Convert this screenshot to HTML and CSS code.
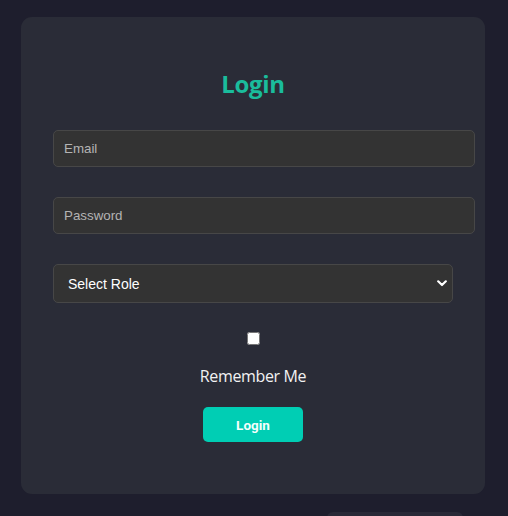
FILE: index.html
```html
<!DOCTYPE html>
<html lang="en">
<head>
<meta charset="utf-8">
<title>Login</title>
<link rel="stylesheet" href="styles.css">
</head>
<body>
<div class="page">
  <form class="card">
    <h2 class="title">Login</h2>
    <input class="field" type="email" placeholder="Email">
    <input class="field" type="password" placeholder="Password">
    <div class="select-wrap">
      <select class="select">
        <option>Select Role</option>
      </select>
      <svg class="chev" width="10" height="7" viewBox="0 0 10 7"><path d="M1.2 1.3 L5 5 L8.8 1.3" fill="none" stroke="#ffffff" stroke-width="2.2" stroke-linecap="round" stroke-linejoin="round"/></svg>
    </div>
    <input class="check" type="checkbox" id="rem">
    <label class="remember" for="rem">Remember Me</label>
    <button class="btn" type="button">Login</button>
  </form>
  <div class="below"></div>
</div>
</body>
</html>
```
FILE: styles.css
```css
html, body {
  margin: 0;
  padding: 0;
  background: #1e1e2d;
}
.page {
  padding: 17px 0 0 21px;
  height: 516px;
  box-sizing: border-box;
  overflow: hidden;
}
.card {
  width: 400px;
  padding: 32px 32px 52px;
  background: #2a2c37;
  border-radius: 11px;
  display: flex;
  flex-direction: column;
  align-items: flex-start;
  font-family: "Open Sans", "Noto Sans", sans-serif;
}
.title {
  align-self: stretch;
  text-align: center;
  margin: 19px 0 30px;
  font-size: 24px;
  line-height: 32px;
  font-weight: 700;
  color: #1abc9c;
  letter-spacing: -0.3px;
}
.field {
  display: block;
  width: 100%;
  padding: 10px;
  margin: 0 0 30px;
  background: #333333;
  border: 1px solid #474747;
  border-radius: 5px;
  color: #eeeeee;
  font-family: "Liberation Sans", Arial, sans-serif;
  font-size: 13.333px;
  line-height: 15px;
  outline: none;
}
.field::placeholder {
  color: #b4b4b4;
}
.select-wrap {
  position: relative;
  width: 400px;
  margin: 0 0 30px;
}
.select {
  display: block;
  width: 400px;
  height: 39px;
  padding: 0 14px;
  background: #333333;
  border: 1px solid #474747;
  border-radius: 5px;
  color: #ffffff;
  font-family: "Liberation Sans", Arial, sans-serif;
  font-size: 14px;
  appearance: none;
  -webkit-appearance: none;
  outline: none;
}
.chev {
  position: absolute;
  right: 6px;
  top: 16px;
}
.check {
  align-self: center;
  width: 13px;
  height: 13px;
  margin: -1px 0 20px;
}
.remember {
  align-self: center;
  font-size: 16px;
  line-height: 22px;
  color: #f2f2f2;
  letter-spacing: -0.35px;
  margin: 0 0 20px;
}
.btn {
  align-self: center;
  width: 100px;
  height: 35px;
  border: none;
  border-radius: 5px;
  background: #00ceb4;
  color: #f4fffc;
  font-family: "Roboto", "Liberation Sans", sans-serif;
  font-weight: 700;
  font-size: 13.5px;
  cursor: pointer;
}
.below {
  width: 136px;
  height: 20px;
  margin: 18px 0 0 306px;
  background: #292937;
  border-radius: 6px 6px 0 0;
}
```
